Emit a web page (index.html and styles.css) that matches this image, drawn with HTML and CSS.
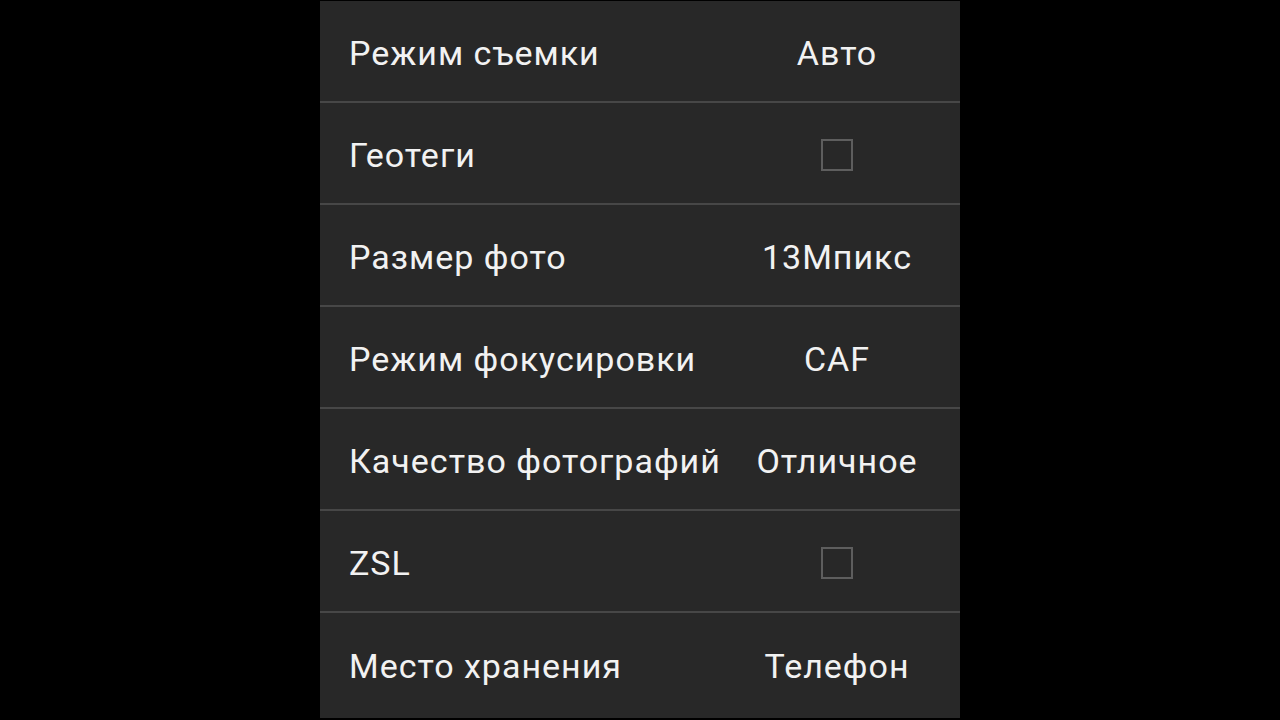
FILE: index.html
```html
<!DOCTYPE html>
<html lang="ru">

<head>
    <meta charset="UTF-8">
    <title>Настройки камеры</title>
    <link rel="stylesheet" href="styles.css">
</head>

<body>

    <!-- Настройки камеры -->
    <div class="settings">
        <div class="row">
            <span class="label">Режим съемки</span>
            <span class="value">Авто</span>
        </div>
        <div class="row">
            <span class="label">Геотеги</span>
            <span class="value"><span class="check"></span></span>
        </div>
        <div class="row">
            <span class="label">Размер фото</span>
            <span class="value">13Мпикс</span>
        </div>
        <div class="row">
            <span class="label">Режим фокусировки</span>
            <span class="value">CAF</span>
        </div>
        <div class="row">
            <span class="label">Качество фотографий</span>
            <span class="value">Отличное</span>
        </div>
        <div class="row">
            <span class="label">ZSL</span>
            <span class="value"><span class="check"></span></span>
        </div>
        <div class="row">
            <span class="label">Место хранения</span>
            <span class="value">Телефон</span>
        </div>
    </div>

</body>

</html>
```

FILE: styles.css
```css
* {
    box-sizing: border-box;
}

body {
    margin: 0;
    background-color: #000;
    font-family: Roboto, "Noto Sans", sans-serif;
    color: #f2f2f2;
    height: 720px;
    display: flex;
    justify-content: center;
}

.settings {
    width: 640px;
    margin-top: 1px;
    height: 717px;
    background-color: #282828;
    display: flex;
    flex-direction: column;
}

.row {
    display: flex;
    align-items: center;
    height: 102px;
    border-bottom: 2px solid #474747;
    padding-left: 29px;
    padding-top: 3px;
    font-size: 34px;
    letter-spacing: 1px;
    white-space: nowrap;
}

.row:last-child {
    border-bottom: none;
    flex: 1;
    padding-top: 0;
}

.label {
    flex: 1;
    min-width: 0;
}

.value {
    width: 246px;
    flex-shrink: 0;
    text-align: center;
    display: flex;
    justify-content: center;
}

.check {
    width: 32px;
    height: 32px;
    border: 2px solid #5e5e5e;
}
```
